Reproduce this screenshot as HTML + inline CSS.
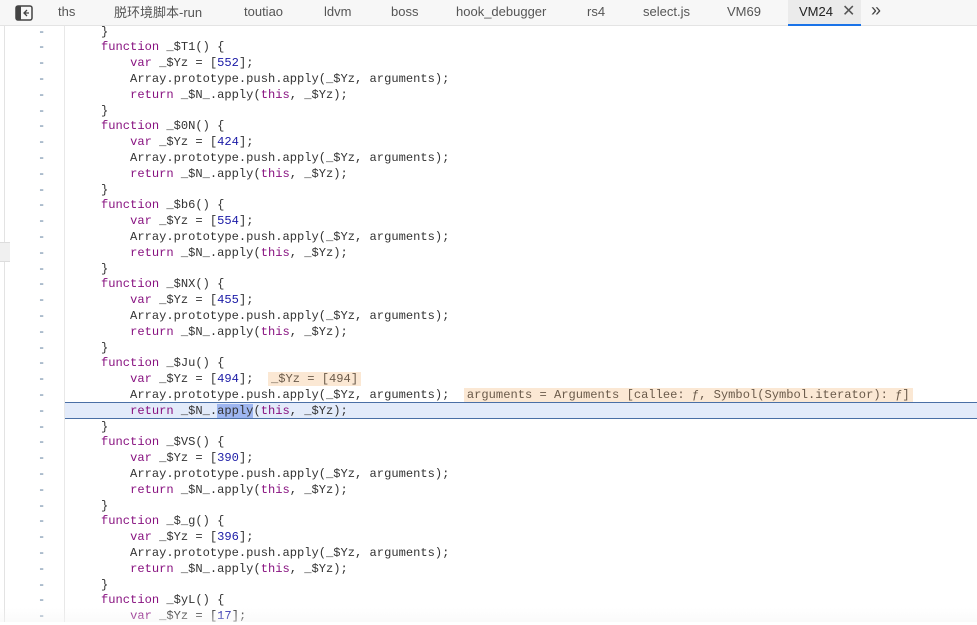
<!DOCTYPE html>
<html><head><meta charset="utf-8"><style>
*{margin:0;padding:0;box-sizing:border-box}
body{width:977px;height:622px;overflow:hidden;background:#fff;position:relative;font-family:"Liberation Sans","Noto Sans CJK SC",sans-serif}
.tabs{position:absolute;left:0;top:0;width:977px;height:26px;background:#f7f7f7;border-bottom:1px solid #e4e4e4}
.tab{position:absolute;top:4px;font-size:13px;color:#555}
.act{position:absolute;left:788px;top:0;width:73px;height:26px;background:#ebebeb;border-bottom:2px solid #1a73e8}
.code{position:absolute;left:0;top:1.5px;font-family:"Liberation Mono",monospace;font-size:12.1px;color:#333}
.r{position:absolute;left:0;width:977px;height:15.8px;line-height:15.8px;white-space:pre}
.d{position:absolute;left:38px;color:#5a7a9a}
.t{position:absolute;left:72px}
.k{color:#881280}.n{color:#1a1aa6}
.gut{position:absolute;left:64px;top:26px;width:1px;height:596px;background:#e8e8e8}
.hl{position:absolute;left:65px;top:402px;width:912px;height:17px;background:#e3ebfa;border-top:1px solid #4a6fa5;border-bottom:1px solid #4a6fa5}
.ann{background:#fbe8d4;color:#6a5a4a;padding:0 3px}
.sel{background:#9eb6f0}
</style></head><body>
<div style="position:absolute;left:4px;top:26px;width:1px;height:596px;background:#e3e3e3"></div>
<div style="position:absolute;left:0;top:242px;width:10px;height:20px;background:#f0f0f0;border-top:1px solid #ddd;border-bottom:1px solid #ddd"></div>
<div class="gut"></div>
<div class="hl"></div>
<div class="code">
<div class="r" style="top:23px"><span class="d">-</span><span class="t">    }</span></div>
<div class="r" style="top:38.8px"><span class="d">-</span><span class="t">    <span class="k">function</span> _$T1() {</span></div>
<div class="r" style="top:54.6px"><span class="d">-</span><span class="t">        <span class="k">var</span> _$Yz = [<span class="n">552</span>];</span></div>
<div class="r" style="top:70.4px"><span class="d">-</span><span class="t">        Array.prototype.push.apply(_$Yz, arguments);</span></div>
<div class="r" style="top:86.2px"><span class="d">-</span><span class="t">        <span class="k">return</span> _$N_.apply(<span class="k">this</span>, _$Yz);</span></div>
<div class="r" style="top:102px"><span class="d">-</span><span class="t">    }</span></div>
<div class="r" style="top:117.8px"><span class="d">-</span><span class="t">    <span class="k">function</span> _$0N() {</span></div>
<div class="r" style="top:133.6px"><span class="d">-</span><span class="t">        <span class="k">var</span> _$Yz = [<span class="n">424</span>];</span></div>
<div class="r" style="top:149.4px"><span class="d">-</span><span class="t">        Array.prototype.push.apply(_$Yz, arguments);</span></div>
<div class="r" style="top:165.2px"><span class="d">-</span><span class="t">        <span class="k">return</span> _$N_.apply(<span class="k">this</span>, _$Yz);</span></div>
<div class="r" style="top:181px"><span class="d">-</span><span class="t">    }</span></div>
<div class="r" style="top:196.8px"><span class="d">-</span><span class="t">    <span class="k">function</span> _$b6() {</span></div>
<div class="r" style="top:212.6px"><span class="d">-</span><span class="t">        <span class="k">var</span> _$Yz = [<span class="n">554</span>];</span></div>
<div class="r" style="top:228.4px"><span class="d">-</span><span class="t">        Array.prototype.push.apply(_$Yz, arguments);</span></div>
<div class="r" style="top:244.2px"><span class="d">-</span><span class="t">        <span class="k">return</span> _$N_.apply(<span class="k">this</span>, _$Yz);</span></div>
<div class="r" style="top:260px"><span class="d">-</span><span class="t">    }</span></div>
<div class="r" style="top:275.8px"><span class="d">-</span><span class="t">    <span class="k">function</span> _$NX() {</span></div>
<div class="r" style="top:291.6px"><span class="d">-</span><span class="t">        <span class="k">var</span> _$Yz = [<span class="n">455</span>];</span></div>
<div class="r" style="top:307.4px"><span class="d">-</span><span class="t">        Array.prototype.push.apply(_$Yz, arguments);</span></div>
<div class="r" style="top:323.2px"><span class="d">-</span><span class="t">        <span class="k">return</span> _$N_.apply(<span class="k">this</span>, _$Yz);</span></div>
<div class="r" style="top:339px"><span class="d">-</span><span class="t">    }</span></div>
<div class="r" style="top:354.8px"><span class="d">-</span><span class="t">    <span class="k">function</span> _$Ju() {</span></div>
<div class="r" style="top:370.6px"><span class="d">-</span><span class="t">        <span class="k">var</span> _$Yz = [<span class="n">494</span>];  <span class="ann">_$Yz = [494]</span></span></div>
<div class="r" style="top:386.4px"><span class="d">-</span><span class="t">        Array.prototype.push.apply(_$Yz, arguments);  <span class="ann">arguments = Arguments [callee: ƒ, Symbol(Symbol.iterator): ƒ]</span></span></div>
<div class="r" style="top:402.2px"><span class="d">-</span><span class="t">        <span class="k">return</span> _$N_.<span class="sel">apply</span>(<span class="k">this</span>, _$Yz);</span></div>
<div class="r" style="top:418px"><span class="d">-</span><span class="t">    }</span></div>
<div class="r" style="top:433.8px"><span class="d">-</span><span class="t">    <span class="k">function</span> _$VS() {</span></div>
<div class="r" style="top:449.6px"><span class="d">-</span><span class="t">        <span class="k">var</span> _$Yz = [<span class="n">390</span>];</span></div>
<div class="r" style="top:465.4px"><span class="d">-</span><span class="t">        Array.prototype.push.apply(_$Yz, arguments);</span></div>
<div class="r" style="top:481.2px"><span class="d">-</span><span class="t">        <span class="k">return</span> _$N_.apply(<span class="k">this</span>, _$Yz);</span></div>
<div class="r" style="top:497px"><span class="d">-</span><span class="t">    }</span></div>
<div class="r" style="top:512.8px"><span class="d">-</span><span class="t">    <span class="k">function</span> _$_g() {</span></div>
<div class="r" style="top:528.6px"><span class="d">-</span><span class="t">        <span class="k">var</span> _$Yz = [<span class="n">396</span>];</span></div>
<div class="r" style="top:544.4px"><span class="d">-</span><span class="t">        Array.prototype.push.apply(_$Yz, arguments);</span></div>
<div class="r" style="top:560.2px"><span class="d">-</span><span class="t">        <span class="k">return</span> _$N_.apply(<span class="k">this</span>, _$Yz);</span></div>
<div class="r" style="top:576px"><span class="d">-</span><span class="t">    }</span></div>
<div class="r" style="top:591.8px"><span class="d">-</span><span class="t">    <span class="k">function</span> _$yL() {</span></div>
<div class="r" style="top:607.6px"><span class="d">-</span><span class="t">        <span class="k">var</span> _$Yz = [<span class="n">17</span>];</span></div>
</div>
<div style="position:absolute;left:0;top:608px;width:977px;height:14px;background:linear-gradient(rgba(255,255,255,0),rgba(245,245,245,0.5))"></div>
<div class="tabs">
<div class="act"></div>
<svg style="position:absolute;left:15px;top:5px" width="18" height="16" viewBox="0 0 18 16"><rect x="1" y="1" width="16" height="14" rx="2" fill="none" stroke="#444" stroke-width="1.5"/><rect x="1" y="1" width="5" height="14" fill="#444"/><path d="M12 5 L9 8 L12 11 M9 8 H14" stroke="#444" stroke-width="1.3" fill="none"/></svg>
<span class="tab" style="left:58px">ths</span>
<span class="tab" style="left:114px;top:2px">脱环境脚本-run</span>
<span class="tab" style="left:244px">toutiao</span>
<span class="tab" style="left:324px">ldvm</span>
<span class="tab" style="left:391px">boss</span>
<span class="tab" style="left:456px">hook_debugger</span>
<span class="tab" style="left:587px">rs4</span>
<span class="tab" style="left:643px">select.js</span>
<span class="tab" style="left:727px">VM69</span>
<span class="tab" style="left:799px;color:#222">VM24</span>
<span class="tab" style="left:842px;top:1px;font-size:16px;color:#555">✕</span>
<span class="tab" style="left:871px;top:0px;font-size:18px;color:#444">»</span>
</div>
</body></html>
